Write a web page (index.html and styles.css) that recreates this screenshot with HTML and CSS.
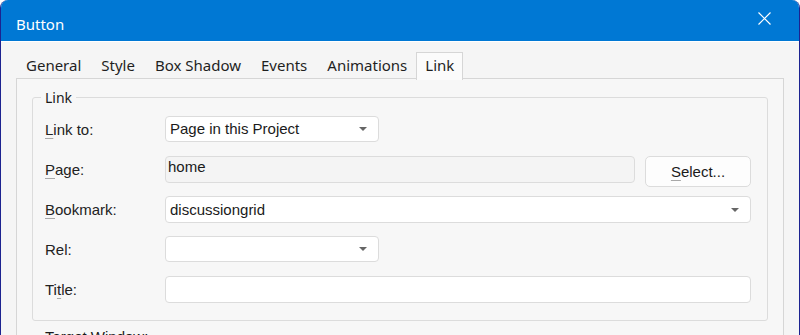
FILE: index.html
```html
<!DOCTYPE html>
<html lang="en">
<head>
   <meta charset="utf-8">
   <title>Button</title>
   <link rel="stylesheet" href="styles.css">
</head>
<body>
   <div class="window">
      <div class="titlebar">
         <span class="title">Button</span>
         <span class="close">
            <svg width="13" height="13" viewBox="0 0 13 13"><path d="M0.5 0.5 L12.5 12.5 M12.5 0.5 L0.5 12.5" stroke="#fff" stroke-width="1.2" fill="none"/></svg>
         </span>
      </div>
      <div class="dialog">
         <div class="tabs">
            <div class="tab">General</div>
            <div class="tab">Style</div>
            <div class="tab">Box Shadow</div>
            <div class="tab">Events</div>
            <div class="tab">Animations</div>
            <div class="tab active">Link</div>
         </div>
         <div class="panel">
            <fieldset class="group">
               <legend>Link</legend>
               <div class="row">
                  <label><u>L</u>ink to:</label>
                  <div class="field select short">Page in this Project<i class="arrow"></i></div>
               </div>
               <div class="row">
                  <label><u>P</u>age:</label>
                  <div class="field readonly">home</div>
                  <div class="button"><u>S</u>elect...</div>
               </div>
               <div class="row">
                  <label><u>B</u>ookmark:</label>
                  <div class="field select wide">discussiongrid<i class="arrow"></i></div>
               </div>
               <div class="row">
                  <label>Rel:</label>
                  <div class="field select short"><i class="arrow"></i></div>
               </div>
               <div class="row">
                  <label>Ti<u>t</u>le:</label>
                  <div class="field wide"></div>
               </div>
            </fieldset>
            <div class="below">Target Window:</div>
         </div>
      </div>
   </div>
</body>
</html>
```

FILE: styles.css
```css
html, body {
   margin:0;
   height:100%;
   overflow:hidden;
   background:#fff;
}
.window {
   height:100%;
   border-left:1px solid #1c2390;
   border-right:1px solid #1c2390;
   border-radius:8px 8px 0 0;
   overflow:hidden;
   background:#f5f5f5;
   font-family:"Noto Sans", sans-serif;
   color:#1a1a1a;
}
.titlebar {
   height:41px;
   background:#0078d4;
   border-bottom:1px solid #fff;
   display:flex;
   justify-content:space-between;
   align-items:flex-start;
   color:#fff;
}
.title {
   font-size:15px;
   line-height:20px;
   margin:14px 0 0 15px;
}
.close {
   width:46px;
   height:36px;
   margin-right:12px;
   display:flex;
   align-items:center;
   justify-content:center;
}
.dialog {
   padding:10px 15px 0 15px;
}
.tabs {
   display:flex;
   height:26px;
}
.tab {
   padding:0 10px;
   font-size:15px;
   line-height:26px;
   color:#1f1f1f;
}
.tab.active {
   background:#fbfbfb;
   border:1px solid #d6d6d6;
   border-bottom:none;
   height:27px;
   line-height:25px;
   padding:0 8px;
   margin-left:-1px;
   position:relative;
   z-index:1;
}
.panel {
   border:1px solid #d6d6d6;
   border-bottom:none;
   background:#f7f7f7;
   padding:10px 15px 0 15px;
   height:300px;
}
.group {
   margin:0;
   border:1px solid #dcdcdc;
   border-radius:3px;
   padding:10px 16px 17px 12px;
   font-family:"Liberation Sans", Arial, sans-serif;
   font-size:15px;
}
.group legend {
   padding:0 4px;
   margin-left:-4px;
   font-family:"Noto Sans", sans-serif;
   font-size:14px;
   line-height:17px;
}
.row {
   display:flex;
   align-items:flex-start;
   height:27px;
   margin-bottom:13px;
}
.row:last-child {
   margin-bottom:0;
}
.row label {
   width:120px;
   flex:none;
   line-height:27px;
   color:#222;
}
u {
   text-decoration-color:#a8a8a8;
   text-underline-offset:3px;
}
.field {
   box-sizing:border-box;
   height:27px;
   border:1px solid #dcdcdc;
   border-radius:4px;
   background:#fff;
   padding:0 4px;
   line-height:25px;
   position:relative;
}
.short {
   width:214px;
   height:26px;
   line-height:24px;
}
.wide {
   flex:1;
}
.readonly {
   flex:1;
   background:#f4f4f4;
   line-height:20px;
   padding-left:2px;
}
.arrow {
   position:absolute;
   right:11px;
   top:50%;
   margin-top:-2px;
   border-left:4px solid transparent;
   border-right:4px solid transparent;
   border-top:4px solid #666;
}
.button {
   box-sizing:border-box;
   width:106px;
   height:31px;
   margin-left:10px;
   border:1px solid #dcdcdc;
   border-radius:5px;
   background:#fdfdfd;
   text-align:center;
   line-height:29px;
}
.below {
   margin:7px 0 0 13px;
   font-family:"Liberation Sans", Arial, sans-serif;
   font-size:15px;
}
```
